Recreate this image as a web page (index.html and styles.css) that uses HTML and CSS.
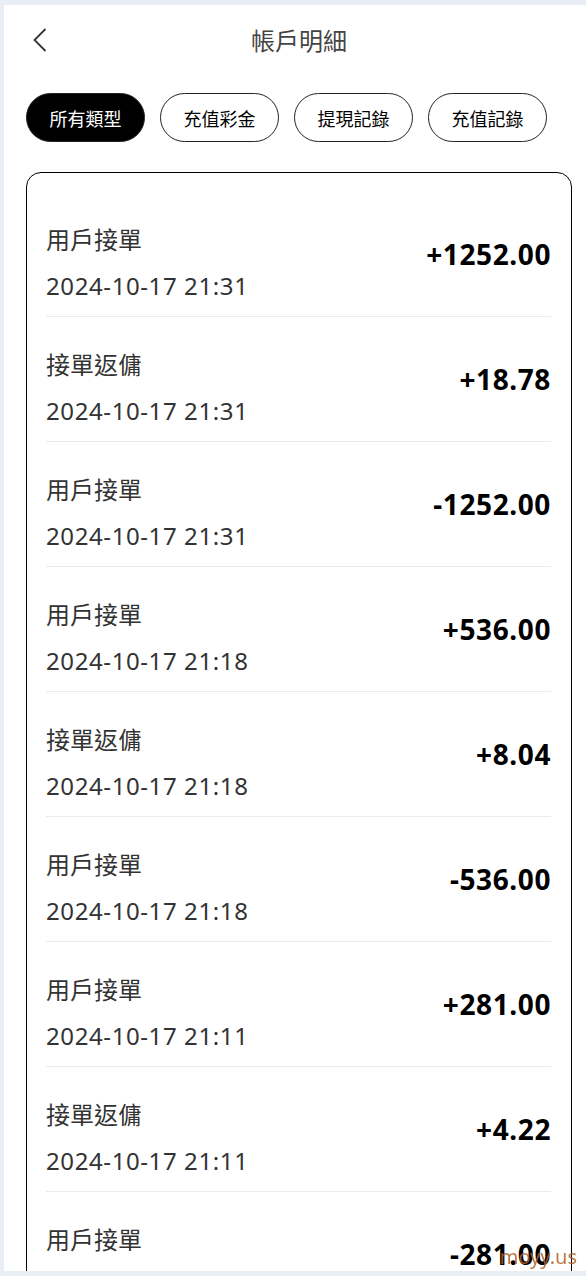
FILE: index.html
```html
<!DOCTYPE html>
<html lang="zh-Hant">

<head>
    <meta charset="UTF-8">
    <meta name="viewport" content="width=device-width, initial-scale=1.0">
    <title>帳戶明細</title>
    <link rel="stylesheet" href="styles.css">
</head>

<body>
    <div class="page">
        <div class="header">
            <div class="back">
                <svg width="14" height="24" viewBox="0 0 14 24">
                    <polyline points="12.5,1 1.5,12 12.5,23" fill="none" stroke="#333" stroke-width="1.8" />
                </svg>
            </div>
            <h1 class="title">帳戶明細</h1>
            <div></div>
        </div>

        <div class="tabs">
            <button class="tab active">所有類型</button>
            <button class="tab">充值彩金</button>
            <button class="tab">提現記錄</button>
            <button class="tab">充值記錄</button>
        </div>

        <div class="card">
            <ul id="recordList" class="records"></ul>
        </div>
    </div>

    <div class="watermark">moyy.us</div>

    <script>
        const records = [
            { type: '用戶接單', time: '2024-10-17 21:31', amount: '+1252.00' },
            { type: '接單返傭', time: '2024-10-17 21:31', amount: '+18.78' },
            { type: '用戶接單', time: '2024-10-17 21:31', amount: '-1252.00' },
            { type: '用戶接單', time: '2024-10-17 21:18', amount: '+536.00' },
            { type: '接單返傭', time: '2024-10-17 21:18', amount: '+8.04' },
            { type: '用戶接單', time: '2024-10-17 21:18', amount: '-536.00' },
            { type: '用戶接單', time: '2024-10-17 21:11', amount: '+281.00' },
            { type: '接單返傭', time: '2024-10-17 21:11', amount: '+4.22' },
            { type: '用戶接單', time: '2024-10-17 21:11', amount: '-281.00' }
        ];

        const recordList = document.getElementById('recordList');
        records.forEach(function (record) {
            let item = document.createElement('li');
            item.className = 'record';
            item.innerHTML = `
                <div class="info">
                    <div class="type">${record.type}</div>
                    <div class="time">${record.time}</div>
                </div>
                <div class="amount">${record.amount}</div>
            `;
            recordList.appendChild(item);
        });
    </script>
</body>

</html>
```

FILE: styles.css
```css
body {
    margin: 0;
    background-color: #e9edf4;
    font-family: "Noto Sans", "Noto Sans CJK TC", sans-serif;
    color: #333;
}

.page {
    margin: 5px 0 0 4px;
    height: 1266px;
    overflow: hidden;
    background-color: white;
    padding: 0 14px 0 22px;
    box-sizing: border-box;
}

.header {
    height: 72px;
    box-sizing: border-box;
    padding-bottom: 4px;
    display: grid;
    grid-template-columns: 1fr auto 1fr;
    align-items: center;
}

.back {
    margin-left: 7px;
    margin-top: 1px;
    display: flex;
    align-items: center;
}

.title {
    margin: 0;
    font-size: 24px;
    font-weight: normal;
    color: #444;
    font-family: "Noto Sans CJK TC", sans-serif;
}

.tabs {
    margin-top: 16px;
    display: flex;
    gap: 15px;
}

.tab {
    width: 119px;
    height: 49px;
    border: 1px solid #222;
    border-radius: 25px;
    background-color: white;
    color: black;
    font-size: 18px;
    font-family: "Noto Sans CJK TC", sans-serif;
    padding: 0;
    cursor: pointer;
}

.tab.active {
    background-color: black;
    color: white;
}

.card {
    margin-top: 30px;
    border: 1px solid black;
    border-radius: 15px;
    padding: 19px 20px 0 19px;
}

.records {
    list-style: none;
    margin: 0;
    padding: 0;
}

.record {
    display: flex;
    justify-content: space-between;
    align-items: center;
    height: 124px;
    border-bottom: 1px solid #ebebeb;
}

.info {
    padding: 31px 0 14px;
}

.type {
    font-size: 24px;
    line-height: 32px;
    font-family: "Noto Sans CJK TC", sans-serif;
}

.time {
    margin-top: 15px;
    font-size: 24px;
    line-height: 32px;
    letter-spacing: 0.6px;
}

.amount {
    font-size: 28px;
    font-weight: bold;
    color: black;
    letter-spacing: 0.6px;
}

.watermark {
    position: fixed;
    right: 9px;
    bottom: 6px;
    font-size: 20px;
    color: rgba(176, 95, 40, 0.85);
    font-family: "Noto Sans", sans-serif;
}
```
